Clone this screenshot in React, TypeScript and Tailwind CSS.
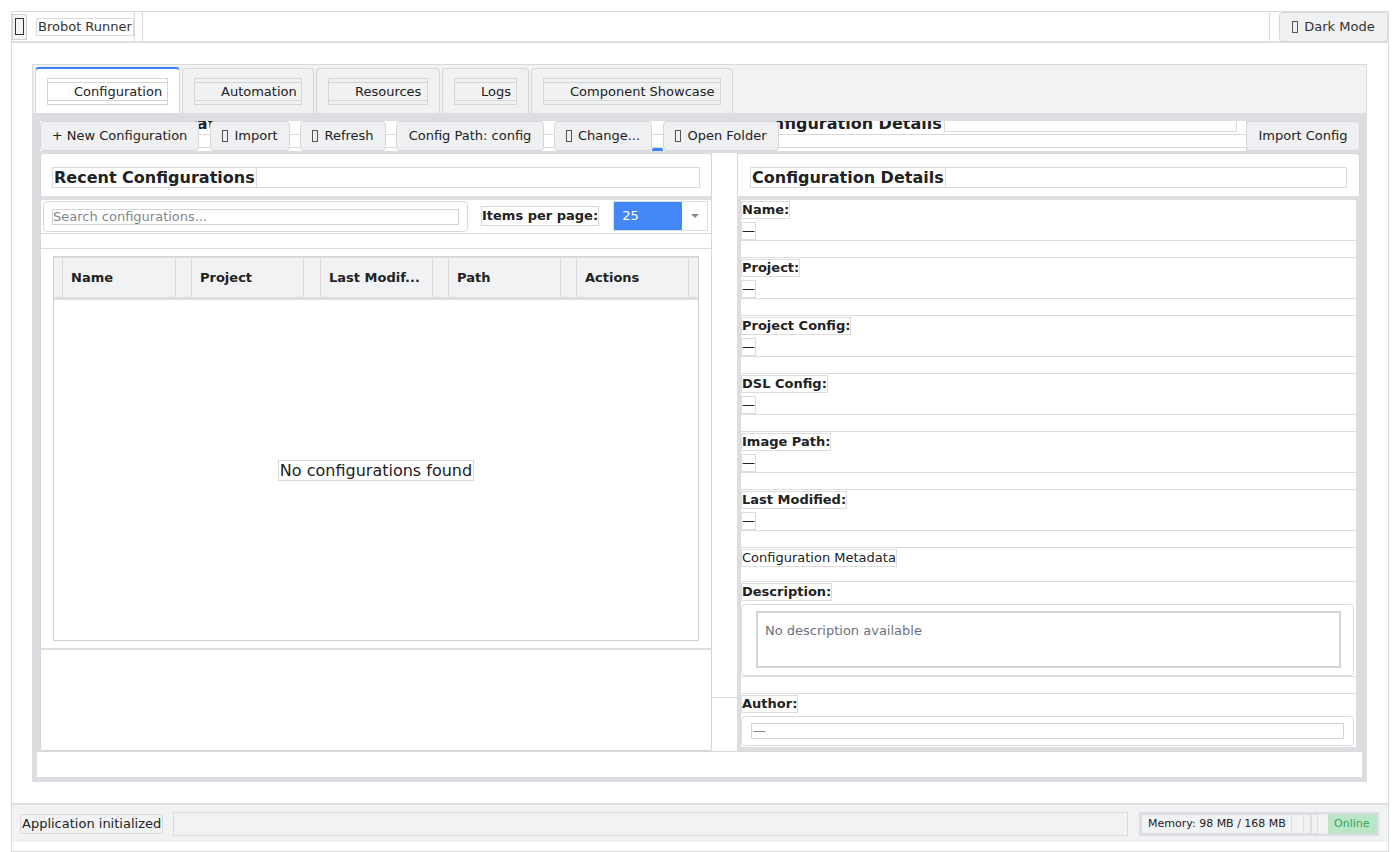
import React from "react";

function Tofu({ className = "" }: { className?: string }) {
  return (
    <span
      className={`inline-block w-[6px] h-[12px] border border-[#555] align-[-2px] mr-[6px] ${className}`}
    />
  );
}

function Btn({ children, className = "" }: { children: React.ReactNode; className?: string }) {
  return (
    <div
      className={`relative h-[30px] flex items-center justify-center bg-[#eff0f2] border border-[#d5d7da] rounded-[4px] text-[13px] text-[#222] whitespace-nowrap ${className}`}
    >
      {children}
    </div>
  );
}

function Tab({ label, active, w, bw }: { label: string; active?: boolean; w: string; bw: string }) {
  return (
    <div
      className={
        active
          ? `${w} h-[46px] px-[11px] flex items-center bg-white border-x border-[#d4d6da] border-t-2 border-t-[#3b82f6] rounded-t-[4px]`
          : `${w} h-[45px] px-[11px] flex items-center bg-[#f0f1f3] border border-b-0 border-[#d4d6da] rounded-t-[4px]`
      }
    >
      <div className={`${bw} h-[27px] border border-[#d4d4d4] py-[3px]`}>
        <div className="h-[19px] border-y border-[#d4d4d4] pl-[26px] leading-[17px] text-[13px] whitespace-nowrap">
          {label}
        </div>
      </div>
    </div>
  );
}

function Field({ label, first }: { label: string; first?: boolean }) {
  return (
    <div className={`border-b border-[#dcdcdc] pt-[1px] ${first ? "" : "border-t"}`}>
      <div className="h-[18px] w-fit border border-[#dcdcdc] font-bold text-[13px] leading-[16px]">
        {label}
      </div>
      <div className="mt-[3px] h-[18px] w-[15px] overflow-hidden border border-[#dcdcdc] text-[13px] leading-[15px]">
        —
      </div>
    </div>
  );
}

function HeadCell({ w, label }: { w: string; label?: string }) {
  return (
    <div className={`${w} h-full border-r border-[#d9d9d9] flex items-center pl-[8px] font-bold text-[13px] whitespace-nowrap`}>
      {label}
    </div>
  );
}

export default function App() {
  const tabs = [
    { label: "Configuration", w: "w-[145px]", bw: "w-[121px]" },
    { label: "Automation", w: "w-[132px]", bw: "w-[108px]" },
    { label: "Resources", w: "w-[124px]", bw: "w-[100px]" },
    { label: "Logs", w: "w-[87px]", bw: "w-[63px]" },
    { label: "Component Showcase", w: "w-[202px]", bw: "w-[178px]" },
  ];
  const fields = ["Name:", "Project:", "Project Config:", "DSL Config:", "Image Path:", "Last Modified:"];

  return (
    <div className="w-[1400px] h-[852px] bg-white font-['DejaVu_Sans',sans-serif] text-[#222] text-[13px] pl-[11px] pt-[11px] overflow-hidden">
      <div className="w-[1378px] h-[841px] border-x border-b border-[#d9d9d9] flex flex-col">
        {/* header */}
        <div className="h-[32px] border-t border-[#d9d9d9] border-b-2 border-b-[#dcdde0] flex items-stretch">
          <div className="self-center h-[26px] w-[15px] border border-[#d4d4d4] bg-[#f3f3f3] flex items-center justify-center">
            <span className="inline-block w-[9px] h-[17px] border-[1.5px] border-[#333]" />
          </div>
          <div className="ml-[9px] self-center h-[18px] border border-[#d9d9d9] px-[1px] leading-[16px] whitespace-nowrap text-[#333]">
            Brobot Runner
          </div>
          <div className="w-[9px] border-x border-[#d9d9d9]" />
          <div className="flex-1 border-r border-[#d9d9d9]" />
          <div className="ml-[9px] w-[109px] h-[30px] self-center flex items-center justify-center bg-[#eff0f2] border border-[#d5d7da] rounded-[4px] text-[#333]">
            <Tofu />
            Dark Mode
          </div>
        </div>

        {/* main */}
        <div className="flex-1 pl-[20px] pr-[21px] pt-[21px] pb-[21px]">
          <div className="h-full flex flex-col">
            <div className="h-[49px] bg-[#f1f2f4] border-x border-t border-[#d9d9d9] flex items-end pl-[2px] gap-[2px]">
              {tabs.map((t, i) => (
                <Tab key={t.label} label={t.label} w={t.w} bw={t.bw} active={i === 0} />
              ))}
            </div>

            <div className="flex-1 bg-[#dcdde0] flex flex-col pt-[8px] pb-[5px]">
              {/* toolbar, with the clipped header row showing behind it */}
              <div className="relative ml-[8px] mr-[7px] h-[30px] flex">
                <div className="absolute left-0 top-0 w-[1206px] h-[30px] bg-white">
                  <div className="relative h-[11px] overflow-hidden">
                    <div className="absolute left-[12px] top-[-8px] font-bold text-[16px] leading-[21px] whitespace-nowrap">
                      Recent Configurations
                    </div>
                    <div className="absolute left-[710px] top-[-8px] font-bold text-[16px] leading-[21px] whitespace-nowrap">
                      Configuration Details
                    </div>
                    <div className="absolute left-[904px] top-0 w-[293px] h-[11px] border-x border-b border-[#d9d9d9]" />
                  </div>
                  <div className="mt-[2px] border-t border-[#d9d9d9]" />
                  <div className="mt-[12px] border-t border-[#d9d9d9]" />
                  <div className="absolute left-[612px] top-[27px] w-[11px] h-[3px] bg-[#3b82f6] rounded-t-[2px]" />
                </div>
                <Btn className="w-[159px]">+ New Configuration</Btn>
                <Btn className="ml-[11px] w-[80px]">
                  <Tofu />
                  Import
                </Btn>
                <Btn className="ml-[10px] w-[86px]">
                  <Tofu />
                  Refresh
                </Btn>
                <Btn className="ml-[10px] w-[148px]">Config Path: config</Btn>
                <Btn className="ml-[10px] w-[98px]">
                  <Tofu />
                  Change...
                </Btn>
                <Btn className="ml-[11px] w-[116px]">
                  <Tofu />
                  Open Folder
                </Btn>
                <Btn className="ml-auto w-[114px]">Import Config</Btn>
              </div>

              {/* panels */}
              <div className="mt-[2px] ml-[8px] mr-[7px] h-[598px] flex">
                {/* left panel */}
                <div className="w-[672px] bg-white border border-[#d6d6d6] rounded-[3px] flex flex-col overflow-hidden">
                  <div className="h-[42px] pt-[13px] px-[11px] flex">
                    <div className="h-[21px] border border-[#dadada] px-[1px] font-bold text-[16px] leading-[19px] whitespace-nowrap">
                      Recent Configurations
                    </div>
                    <div className="flex-1 h-[21px] border border-l-0 border-[#dadada]" />
                  </div>
                  <div className="h-[4px] bg-[#dcdde0]" />
                  <div className="h-[33px] flex items-start">
                    <div className="mt-[1px] ml-[2px] w-[425px] h-[31px] border border-[#d9d9d9] rounded-[4px] px-[8px] flex items-center">
                      <div className="flex-1 h-[16px] border border-[#d4d4d4] text-[13px] leading-[14px] text-[#80868e] whitespace-nowrap overflow-hidden">
                        Search configurations...
                      </div>
                    </div>
                    <div className="ml-[13px] mt-[6px] h-[20px] border border-[#d9d9d9] font-bold text-[13px] leading-[18px] whitespace-nowrap">
                      Items per page:
                    </div>
                    <div className="ml-[14px] mt-[1px] w-[95px] h-[30px] flex border border-[#e0e0e0]">
                      <div className="w-[68px] bg-[#4287f5] text-white text-[13px] leading-[28px] pl-[8px]">25</div>
                      <div className="flex-1 bg-white flex items-center justify-center">
                        <span className="w-0 h-0 border-x-[4px] border-x-transparent border-t-[4px] border-t-[#888]" />
                      </div>
                    </div>
                  </div>
                  <div className="h-[16px] border-y border-[#dcdcdc]" />
                  <div className="h-[401px] border-b-2 border-[#dcdde0] px-[12px] pt-[7px] pb-[7px]">
                    <div className="h-full border border-[#d4d4d4] flex flex-col">
                      <div className="h-[43px] bg-[#f1f2f4] border-t border-[#dcdde0] border-b-[3px] border-b-[#dcdde0] flex">
                        <HeadCell w="w-[8px]" />
                        <HeadCell w="w-[113px]" label="Name" />
                        <HeadCell w="w-[16px]" />
                        <HeadCell w="w-[112px]" label="Project" />
                        <HeadCell w="w-[17px]" />
                        <HeadCell w="w-[112px]" label="Last Modif..." />
                        <HeadCell w="w-[16px]" />
                        <HeadCell w="w-[112px]" label="Path" />
                        <HeadCell w="w-[16px]" />
                        <HeadCell w="w-[112px]" label="Actions" />
                        <div className="flex-1" />
                      </div>
                      <div className="flex-1 flex items-center justify-center">
                        <div className="h-[21px] border border-[#d9d9d9] px-[1px] text-[16px] leading-[19px] whitespace-nowrap">
                          No configurations found
                        </div>
                      </div>
                    </div>
                  </div>
                  <div className="flex-1 bg-white" />
                </div>

                {/* splitter */}
                <div className="w-[25px] bg-white flex flex-col">
                  <div className="h-[545px] border-b border-[#dcdcdc]" />
                </div>

                {/* right panel */}
                <div className="flex-1 flex flex-col">
                  <div className="h-[43px] bg-white border border-b-0 border-[#d6d6d6] rounded-t-[3px] pt-[13px] px-[12px] flex">
                    <div className="h-[21px] border border-[#dadada] px-[1px] font-bold text-[16px] leading-[19px] whitespace-nowrap">
                      Configuration Details
                    </div>
                    <div className="flex-1 h-[21px] border border-l-0 border-[#dadada]" />
                  </div>
                  <div className="flex-1 bg-white border-4 border-[#dcdde0] flex flex-col">
                    {fields.map((f, i) => (
                      <React.Fragment key={f}>
                        <Field label={f} first={i === 0} />
                        <div className="h-[16px]" />
                      </React.Fragment>
                    ))}
                    <div className="border-y border-[#dcdcdc] pt-[1px] pb-[14px]">
                      <div className="h-[18px] w-fit border border-[#dcdcdc] text-[13px] leading-[16px] whitespace-nowrap">
                        Configuration Metadata
                      </div>
                    </div>
                    <div className="border-b border-[#dcdcdc] pt-[1px]">
                      <div className="h-[18px] w-fit border border-[#dcdcdc] font-bold text-[13px] leading-[16px]">
                        Description:
                      </div>
                      <div className="mt-[3px] mr-[2px] h-[72px] border border-[#dcdcdc] rounded-[4px] pl-[14px] pr-[12px] pt-[6px]">
                        <div className="h-[57px] border-2 border-[#d4d4d4] pl-[7px] pt-[10px] text-[13px] leading-[16px] text-[#6b7280]">
                          No description available
                        </div>
                      </div>
                    </div>
                    <div className="h-[16px]" />
                    <div className="flex-1 border-t border-[#dcdcdc] pt-[1px]">
                      <div className="h-[18px] w-fit border border-[#dcdcdc] font-bold text-[13px] leading-[16px]">
                        Author:
                      </div>
                      <div className="mt-[3px] mr-[2px] h-[30px] border border-[#dcdcdc] rounded-[4px] px-[9px] flex items-center">
                        <div className="flex-1 h-[16px] border border-[#d4d4d4] text-[13px] leading-[13px] pl-[1px] text-[#888]">
                          —
                        </div>
                      </div>
                    </div>
                  </div>
                </div>
              </div>

              <div className="mx-[5px] flex-1 bg-white border-t border-[#d9d9d9]" />
            </div>
          </div>
        </div>

        {/* status bar */}
        <div className="h-[39px] bg-[#f1f2f4] border-t-2 border-[#dcdde0] flex items-center pl-[8px] pr-[9px]">
          <div className="h-[20px] border border-[#d9d9d9] px-[1px] leading-[18px] whitespace-nowrap">
            Application initialized
          </div>
          <div className="ml-[10px] flex-1 h-[24px] border border-[#d9d9d9]" />
          <div className="ml-[11px] w-[240px] h-[24px] border-2 border-[#dcdde0] flex bg-[#f1f2f4]">
            <div className="w-[151px] border border-[#dcdde0] text-[11px] leading-[18px] pl-[6px] whitespace-nowrap">
              Memory: 98 MB / 168 MB
            </div>
            <div className="w-[11px] border-y border-[#dcdde0]" />
            <div className="w-[8px] border border-[#dcdde0]" />
            <div className="w-[7px] border border-[#dcdde0]" />
            <div className="w-[10px]" />
            <div className="flex-1 bg-[#b9e6c6] text-[#3aa55a] text-[11px] leading-[20px] pl-[6px]">Online</div>
          </div>
        </div>
        <div className="h-[9px] bg-white" />
      </div>
    </div>
  );
}
